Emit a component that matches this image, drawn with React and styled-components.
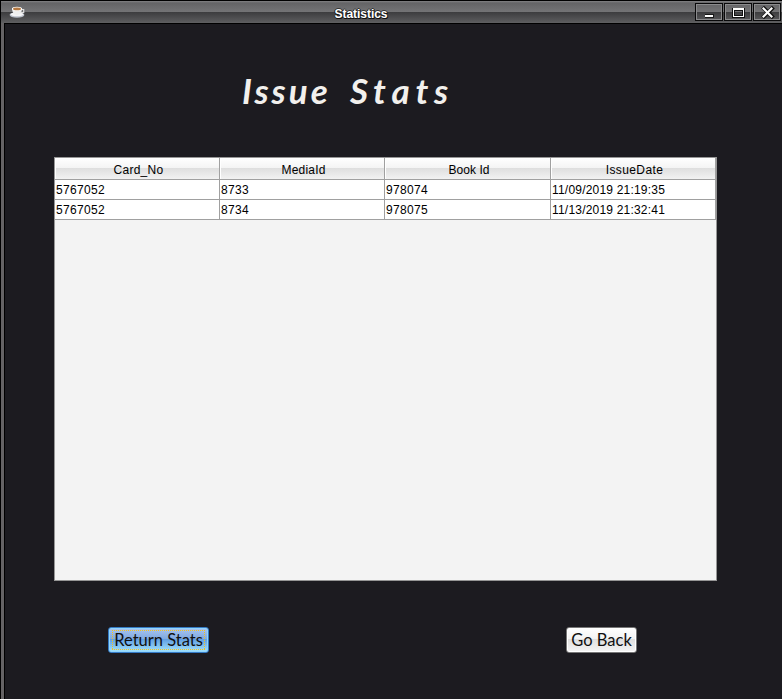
import React from "react";
import styled, { createGlobalStyle } from "styled-components";

const GlobalStyle = createGlobalStyle`
  * { box-sizing: border-box; }
  body { margin: 0; background: #1c1b20; overflow: hidden; }
`;

const Window = styled.div`
  display: flex;
  flex-direction: column;
  width: 782px;
  height: 699px;
  background: #1c1b20;
  font-family: "Liberation Sans", Arial, sans-serif;
`;

const TitleBar = styled.header`
  display: grid;
  grid-template-columns: 100px 1fr 100px;
  flex: none;
  height: 24px;
  border-top: 1px solid #000;
  border-bottom: 1px solid #000;
  border-left: 1px solid #000;
  background: linear-gradient(#828284 0, #646466 2px, #747476 11px, #3c3c3e 11px, #58585a 20px, #606062 22px);
`;

const AppIcon = styled.svg`
  width: 18px;
  height: 16px;
  margin: 3px 0 0 7px;
`;

const WindowTitle = styled.h1`
  margin: 0;
  padding: 2px 61px 0 0;
  justify-self: center;
  color: #fff;
  font-size: 12px;
  line-height: 22px;
  letter-spacing: -0.05px;
  white-space: nowrap;
  text-shadow: -1px 0 #222, 1px 0 #222, 0 1px #111, 0 -1px #333, 1px 1px #111;
`;

const WindowButtons = styled.div`
  display: flex;
  gap: 1px;
  justify-content: flex-end;
  padding: 2px 1px 0 0;
`;

const WindowButton = styled.button`
  display: flex;
  width: 28px;
  height: 18px;
  padding: 0;
  border: 1px solid #09090a;
  box-shadow: inset 0 0 0 1px #8a8a8c;
  background: linear-gradient(#646466 0, #747476 8px, #3c3c3e 8px, #58585a 16px);
  svg { width: 26px; height: 16px; }
`;

const Frame = styled.div`
  display: flex;
  flex: 1;
  border-left: 1px solid #000;
`;

const FrameEdge = styled.div`
  width: 4px;
  margin-top: -1px;
  background: #656365;
  border-right: 1px solid #000;
`;

const Content = styled.main`
  flex: 1;
  padding: 46px 65px 0 49px;
`;

const Heading = styled.h2`
  display: flex;
  gap: 22px;
  height: 87px;
  margin: 0;
  padding-left: 188px;
  color: #f2f0ed;
  font: italic 700 35px/40px Lato, sans-serif;
`;

const Word = styled.span`
  width: ${(p) => p.$width}px;
  letter-spacing: ${(p) => p.$tracking}px;
`;

const TablePane = styled.section`
  width: 663px;
  height: 424px;
  border: 1px solid #969696;
  background: #f3f3f3;
`;

const Table = styled.table`
  width: 661px;
  table-layout: fixed;
  border-spacing: 0;
  color: #000;
  font-size: 12px;
  col { width: 165px; }
  col:nth-child(3) { width: 166px; }
`;

const HeaderCell = styled.th`
  height: 22px;
  padding: 2px 0 0 3px;
  border-right: 1px solid #a0a0a0;
  border-bottom: 1px solid #a0a0a0;
  background: linear-gradient(#fff 0, #f4f4f4 10px, #dedede 10px, #f2f2f2 21px);
  box-shadow: inset 1px 1px #fff;
  font-weight: 400;
  line-height: 18px;
  letter-spacing: ${(p) => p.$tracking}px;
`;

const Cell = styled.td`
  height: 20px;
  padding: 1px 0 0 1px;
  border-right: 1px solid #a0a0a0;
  border-bottom: 1px solid #a0a0a0;
  background: #fff;
  line-height: 18px;
  letter-spacing: ${(p) => p.$tracking}px;
  white-space: nowrap;
`;

const Actions = styled.footer`
  display: flex;
  gap: 357px;
  padding: 46px 0 0 54px;
`;

const ActionButton = styled.button`
  width: ${(p) => p.$width}px;
  height: 26px;
  padding: 2px;
  border: 1px solid ${(p) => (p.$active ? "#347ac5" : "#777")};
  border-radius: 3px;
  box-shadow: inset 0 0 0 1px ${(p) => (p.$active ? "#91d5fc" : "#fff")};
  background: ${(p) =>
    p.$active
      ? "linear-gradient(#aac6f0 0, #80a9e0 11px, #5f9de2 11px, #a4e6ff 24px)"
      : "linear-gradient(#fff 0, #f3f3f3 11px, #dedede 11px, #f5f5f5 24px)"};
  color: #101010;
  font: 400 16.5px/20px Lato, sans-serif;
  white-space: nowrap;
`;

const ButtonLabel = styled.span`
  display: block;
  width: 100%;
  height: 20px;
  line-height: 20px;
  ${(p) =>
    p.$active &&
    `background:
      repeating-linear-gradient(90deg, #f5c01d 0 1px, transparent 1px 2px) 1px 0 / calc(100% - 2px) 1px no-repeat,
      repeating-linear-gradient(90deg, #f5c01d 0 1px, transparent 1px 2px) 1px 100% / calc(100% - 2px) 1px no-repeat,
      repeating-linear-gradient(#f5c01d 0 1px, transparent 1px 2px) 1px 0 / 1px 100% no-repeat,
      repeating-linear-gradient(#f5c01d 0 1px, transparent 1px 2px) calc(100% - 1px) 0 / 1px 100% no-repeat;`}
`;

const columns = [
  { label: "Card_No", tracking: 0.25 },
  { label: "MediaId", tracking: 0.2 },
  { label: "Book Id", tracking: 0.05 },
  { label: "IssueDate", tracking: 0.4 },
];
const rows = [
  ["5767052", "8733", "978074", "11/09/2019 21:19:35"],
  ["5767052", "8734", "978075", "11/13/2019 21:32:41"],
];

const CoffeeIcon = () => (
  <AppIcon viewBox="0 0 18 16">
    <ellipse cx="9" cy="11" rx="7.4" ry="2.7" fill="#b9bec8" />
    <ellipse cx="9" cy="10.3" rx="6.5" ry="2" fill="#f3f3f5" />
    <path d="M13.5 5.5h2.2v3h-3" fill="none" stroke="#ddd" strokeWidth="1.2" />
    <path d="M4 4h10c0 4-1.8 7-5 7S4 8 4 4Z" fill="#eee" />
    <ellipse cx="9" cy="4.7" rx="5" ry="2" fill="#fff" />
    <ellipse cx="9" cy="4.9" rx="4" ry="1.3" fill="#b57942" />
  </AppIcon>
);

export default function App() {
  return (
    <>
      <GlobalStyle />
      <Window>
        <TitleBar>
          <CoffeeIcon />
          <WindowTitle>Statistics</WindowTitle>
          <WindowButtons>
            <WindowButton aria-label="Minimize">
              <svg viewBox="0 0 26 16" shapeRendering="crispEdges"><path d="M9 10h9v4H9z" fill="#171717" /><path d="M9 11h8v2H9z" fill="#fff" /></svg>
            </WindowButton>
            <WindowButton aria-label="Maximize">
              <svg viewBox="0 0 26 16" shapeRendering="crispEdges"><path d="M8.5 5.5h10v7h-10z" fill="none" stroke="#111" strokeWidth="3" /><path d="M8 4h11v9H8zM9 6v6h9V6z" fill="#fff" fillRule="evenodd" /></svg>
            </WindowButton>
            <WindowButton aria-label="Close">
              <svg viewBox="0 0 26 16"><path d="m10 4.5 8 8m0-8-8 8" stroke="#111" strokeWidth="4" strokeLinecap="square" /><path d="m9.5 4.5 8 8m0-8-8 8" stroke="#fff" strokeWidth="2.1" strokeLinecap="square" /></svg>
            </WindowButton>
          </WindowButtons>
        </TitleBar>
        <Frame>
          <FrameEdge />
          <Content>
            <Heading><Word $width={86} $tracking={3}>Issue</Word><Word $width={120} $tracking={5.8}>Stats</Word></Heading>
            <TablePane>
              <Table>
                <colgroup>{columns.map((c) => <col key={c.label} />)}</colgroup>
                <thead><tr>{columns.map((c) => <HeaderCell key={c.label} $tracking={c.tracking}>{c.label}</HeaderCell>)}</tr></thead>
                <tbody>
                  {rows.map((row) => (
                    <tr key={row[3]}>{row.map((value, i) => <Cell key={i} $tracking={i === 3 ? 0.2 : 0.33}>{value}</Cell>)}</tr>
                  ))}
                </tbody>
              </Table>
            </TablePane>
            <Actions>
              <ActionButton $active $width={101}><ButtonLabel $active>Return Stats</ButtonLabel></ActionButton>
              <ActionButton $width={71}><ButtonLabel>Go Back</ButtonLabel></ActionButton>
            </Actions>
          </Content>
        </Frame>
      </Window>
    </>
  );
}
